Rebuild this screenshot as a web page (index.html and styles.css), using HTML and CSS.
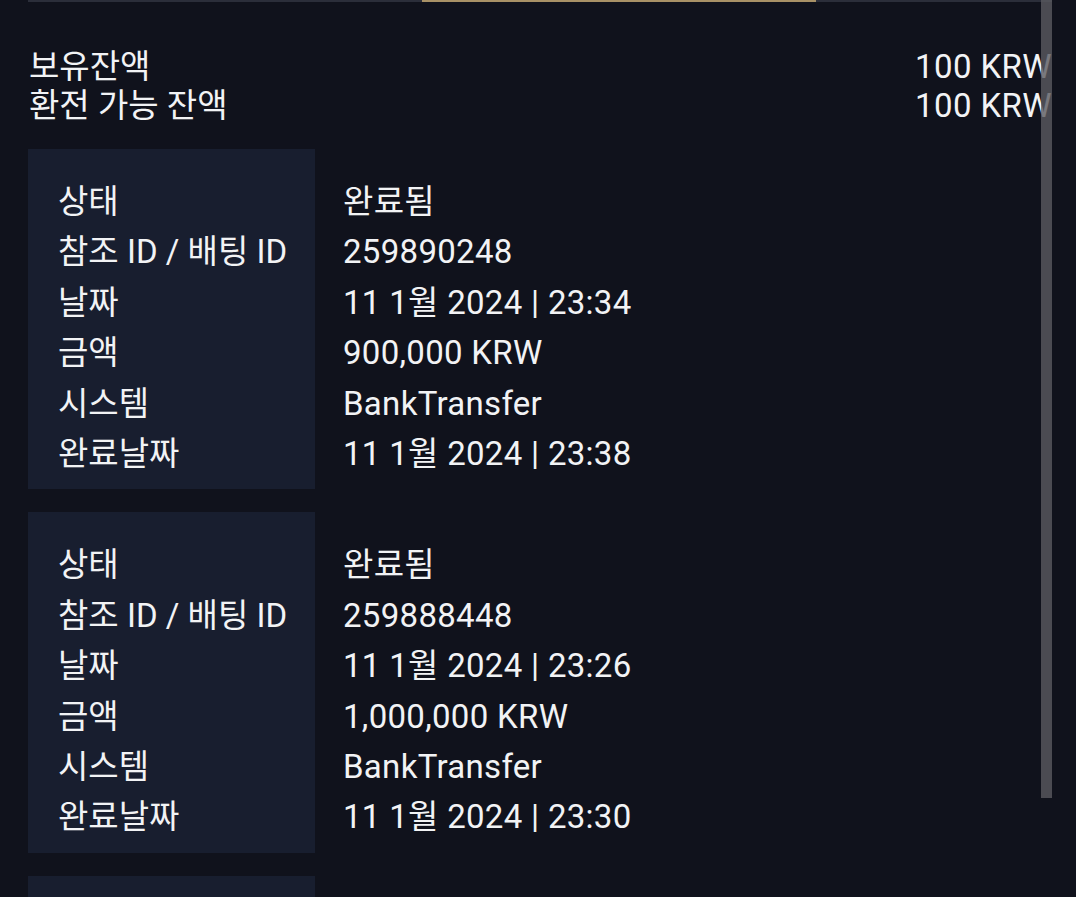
FILE: index.html
```html
<!DOCTYPE html>
<html lang="ko">
<head>
  <meta charset="UTF-8">
  <title>출금 내역</title>
  <link rel="stylesheet" href="styles.css">
</head>
<body>
  <div class="page">
    <div class="tabs-line">
      <span class="tabs-active"></span>
    </div>

    <div class="balance">
      <div class="balance-row">
        <span>보유잔액</span>
        <span class="amount">100 KRW</span>
      </div>
      <div class="balance-row">
        <span>환전 가능 잔액</span>
        <span class="amount">100 KRW</span>
      </div>
    </div>

    <table class="record">
      <tr><th>상태</th><td>완료됨</td></tr>
      <tr><th>참조 ID / 배팅 ID</th><td>259890248</td></tr>
      <tr><th>날짜</th><td>11 1월 2024 | 23:34</td></tr>
      <tr><th>금액</th><td>900,000 KRW</td></tr>
      <tr><th>시스템</th><td>BankTransfer</td></tr>
      <tr><th>완료날짜</th><td>11 1월 2024 | 23:38</td></tr>
    </table>

    <table class="record">
      <tr><th>상태</th><td>완료됨</td></tr>
      <tr><th>참조 ID / 배팅 ID</th><td>259888448</td></tr>
      <tr><th>날짜</th><td>11 1월 2024 | 23:26</td></tr>
      <tr><th>금액</th><td>1,000,000 KRW</td></tr>
      <tr><th>시스템</th><td>BankTransfer</td></tr>
      <tr><th>완료날짜</th><td>11 1월 2024 | 23:30</td></tr>
    </table>

    <div class="record-stub"></div>
  </div>

  <div class="scrollbar"></div>
</body>
</html>
```

FILE: styles.css
```css
* {
  box-sizing: border-box;
}

html,
body {
  height: 100%;
}

body {
  margin: 0;
  background: #10121c;
  color: #f2f3f5;
  font-family: "Roboto", "Noto Sans CJK KR", sans-serif;
  font-size: 33px;
  overflow: hidden;
}

.page {
  padding: 0 24px 0 28px;
}

.tabs-line {
  height: 2px;
  background: #2b2e3a;
  display: flex;
  padding-left: 394px;
}

.tabs-active {
  width: 394px;
  background: #a89166;
}

.balance {
  margin-top: 45px;
  margin-bottom: 24px;
  padding-left: 1px;
}

.balance-row {
  display: flex;
  justify-content: space-between;
  line-height: 39px;
}

.amount {
  letter-spacing: 0.4px;
}

.record {
  border-collapse: collapse;
  margin-bottom: 23px;
}

.record th,
.record td {
  padding: 0;
  line-height: 50.4px;
  font-weight: 400;
  text-align: left;
  white-space: nowrap;
}

.record th {
  width: 287px;
  padding-left: 30px;
  background: #181e2f;
}

.record td {
  padding-left: 28px;
  letter-spacing: 0.3px;
}

.record tr:first-child th,
.record tr:first-child td {
  padding-top: 28px;
}

.record tr:last-child th,
.record tr:last-child td {
  padding-bottom: 10px;
}

.record-stub {
  width: 287px;
  height: 40px;
  background: #181e2f;
}

.scrollbar {
  position: absolute;
  top: 0;
  left: 1041px;
  width: 11px;
  height: 798px;
  background: rgba(90, 90, 96, 0.8);
}
```
